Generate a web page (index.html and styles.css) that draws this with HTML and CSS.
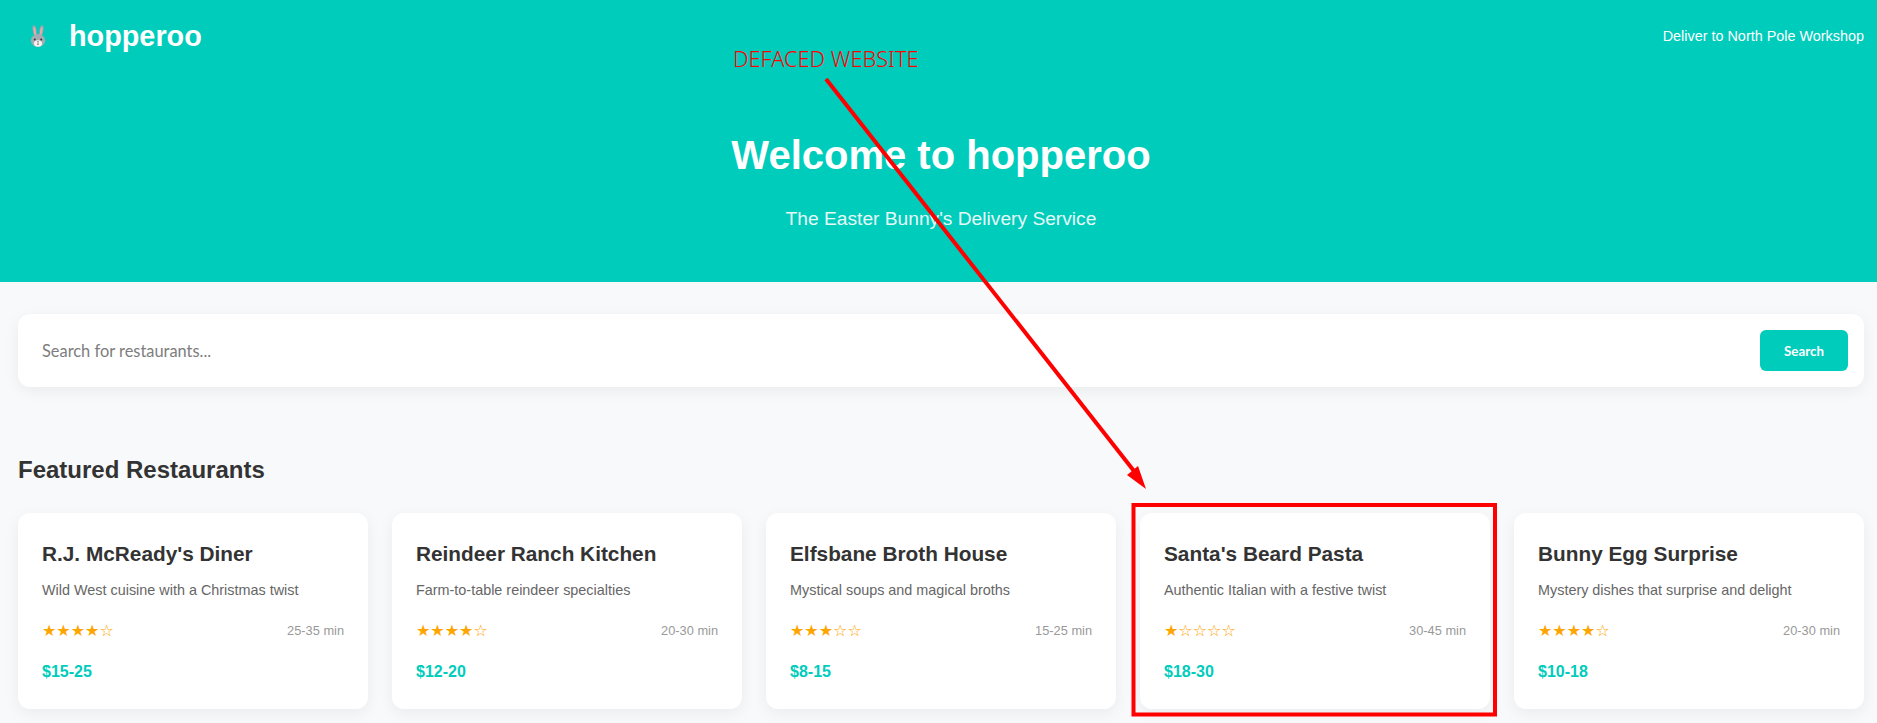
FILE: index.html
```html
<!DOCTYPE html>
<html lang="en">
<head>
    <meta charset="UTF-8">
    <meta name="viewport" content="width=device-width, initial-scale=1.0">
    <title>hopperoo</title>
    <link rel="stylesheet" href="styles.css">
</head>
<body>
    <header class="hero">
        <div class="topbar">
            <div class="logo">
                <svg class="logo-icon" viewBox="0 0 20 24" width="20" height="24">
                    <path d="M6.2 12C4.6 8 4 3.500 5 1.500C6.300 .5 7.800 2 8.300 5L9 11Z" fill="#9aa5ad"/>
                    <path d="M13.800 12C15.400 8 16 3.500 15 1.500C13.700 .5 12.200 2 11.700 5L11 11Z" fill="#9aa5ad"/>
                    <path d="M6.800 11C5.600 8 5.200 4.500 5.800 2.800C6.600 2.400 7.300 4 7.700 6L8.300 11Z" fill="#f2a7ad"/>
                    <path d="M13.200 11C14.400 8 14.800 4.500 14.200 2.800C13.400 2.400 12.700 4 12.300 6L11.700 11Z" fill="#f2a7ad"/>
                    <ellipse cx="10" cy="16.500" rx="7.200" ry="6.500" fill="#a3adb3"/>
                    <ellipse cx="10" cy="19.500" rx="4" ry="3.300" fill="#f4f4f2"/>
                    <circle cx="6.800" cy="15.500" r="1" fill="#3b3030"/>
                    <circle cx="13.200" cy="15.500" r="1" fill="#3b3030"/>
                    <path d="M8.800 17.400H11.200L10 18.700Z" fill="#6b4a42"/>
                    <path d="M9.300 19.500H10.700V20.800H9.300Z" fill="#5a4a46"/>
                </svg>
                <span class="logo-text">hopperoo</span>
            </div>
            <div class="deliver">Deliver to North Pole Workshop</div>
        </div>
        <h1 class="hero-title">Welcome to hopperoo</h1>
        <p class="hero-sub">The Easter Bunny's Delivery Service</p>
    </header>

    <main class="content">
        <div class="search-box">
            <input class="search-input" type="text" placeholder="Search for restaurants...">
            <button class="search-btn">Search</button>
        </div>

        <h2 class="section-title">Featured Restaurants</h2>
        <div class="cards">
            <div class="card">
                <h3 class="card-name">R.J. McReady's Diner</h3>
                <p class="card-desc">Wild West cuisine with a Christmas twist</p>
                <div class="card-meta"><span class="stars">★★★★☆</span><span class="time">25-35 min</span></div>
                <div class="price">$15-25</div>
            </div>
            <div class="card">
                <h3 class="card-name">Reindeer Ranch Kitchen</h3>
                <p class="card-desc">Farm-to-table reindeer specialties</p>
                <div class="card-meta"><span class="stars">★★★★☆</span><span class="time">20-30 min</span></div>
                <div class="price">$12-20</div>
            </div>
            <div class="card">
                <h3 class="card-name">Elfsbane Broth House</h3>
                <p class="card-desc">Mystical soups and magical broths</p>
                <div class="card-meta"><span class="stars">★★★☆☆</span><span class="time">15-25 min</span></div>
                <div class="price">$8-15</div>
            </div>
            <div class="card">
                <h3 class="card-name">Santa's Beard Pasta</h3>
                <p class="card-desc">Authentic Italian with a festive twist</p>
                <div class="card-meta"><span class="stars">★☆☆☆☆</span><span class="time">30-45 min</span></div>
                <div class="price">$18-30</div>
            </div>
            <div class="card">
                <h3 class="card-name">Bunny Egg Surprise</h3>
                <p class="card-desc">Mystery dishes that surprise and delight</p>
                <div class="card-meta"><span class="stars">★★★★☆</span><span class="time">20-30 min</span></div>
                <div class="price">$10-18</div>
            </div>
        </div>
    </main>

    <!-- red markup drawn over the page -->
    <div class="markup-label">DEFACED WEBSITE</div>
    <svg class="markup" width="1877" height="723" viewBox="0 0 1877 723">
        <line x1="826" y1="79" x2="1134" y2="471" stroke="#ff0000" stroke-width="4"/>
        <path d="M1146 489L1127 475L1138 466Z" fill="#ff0000"/>
        <rect x="1133.500" y="505" width="361.500" height="209.500" fill="none" stroke="#ff0000" stroke-width="4"/>
    </svg>
</body>
</html>
```
FILE: styles.css
```css
* {
    box-sizing: border-box;
    margin: 0;
    padding: 0;
}
html, body {
    height: 723px;
    overflow: hidden;
}
body {
    position: relative;
    font-family: 'Liberation Sans', Arial, sans-serif;
    background: #f8f9fa;
    color: #333;
}
.hero {
    background: #00ccbc;
    color: white;
    height: 282px;
    padding: 0 13px 0 18px;
    text-align: center;
}
.topbar {
    display: flex;
    justify-content: space-between;
    align-items: center;
    height: 72px;
}
.logo {
    display: flex;
    align-items: center;
    gap: 21px;
}
.logo-icon {
    margin-left: 10px;
}
.logo-text {
    font-size: 28.8px;
    font-weight: bold;
}
.deliver {
    font-size: 14.4px;
}
.hero-title {
    font-size: 40px;
    font-weight: bold;
    margin-top: 57px;
    line-height: 52px;
}
.hero-sub {
    font-size: 19.2px;
    margin-top: 27px;
    opacity: .9;
}
.content {
    padding: 32px 13px 0 18px;
}
.search-box {
    display: flex;
    align-items: center;
    justify-content: space-between;
    height: 73px;
    padding: 0 16px 0 24px;
    background: white;
    border-radius: 12px;
    box-shadow: 0 4px 15px rgba(0, 0, 0, 0.06);
}
.search-input {
    flex: 1;
    border: none;
    outline: none;
    font-family: 'Lato', sans-serif;
    font-size: 16.4px;
    background: transparent;
    color: #333;
}
.search-input::placeholder {
    color: #7d7d7d;
}
.search-btn {
    width: 88px;
    height: 41px;
    background: #00ccbc;
    color: white;
    border: none;
    border-radius: 6px;
    font-family: 'Lato', sans-serif;
    font-size: 13.33px;
    font-weight: bold;
}
.section-title {
    font-size: 24px;
    font-weight: bold;
    margin-top: 68px;
    line-height: 30px;
}
.cards {
    display: grid;
    grid-template-columns: repeat(5, 1fr);
    gap: 24px;
    margin-top: 28px;
}
.card {
    background: white;
    border-radius: 12px;
    height: 196px;
    padding: 24px;
    box-shadow: 0 4px 15px rgba(0, 0, 0, 0.06);
}
.card-name {
    font-size: 20.8px;
    font-weight: bold;
    line-height: 33px;
}
.card-desc {
    font-size: 14.4px;
    color: #666;
    margin-top: 9px;
    line-height: 23px;
}
.card-meta {
    display: flex;
    justify-content: space-between;
    align-items: center;
    margin-top: 15px;
    height: 26px;
}
.stars {
    font-family: 'DejaVu Sans', sans-serif;
    font-size: 16px;
    color: #ffa500;
}
.time {
    font-size: 12.8px;
    color: #999;
}
.price {
    font-size: 16px;
    font-weight: bold;
    color: #00ccbc;
    margin-top: 16px;
    line-height: 26px;
}
.markup-label {
    position: absolute;
    left: 733px;
    top: 44px;
    font-family: 'Noto Sans', sans-serif;
    font-weight: 300;
    font-size: 21.8px;
    color: #ff0000;
}
.markup {
    position: absolute;
    left: 0;
    top: 0;
    pointer-events: none;
}
```
